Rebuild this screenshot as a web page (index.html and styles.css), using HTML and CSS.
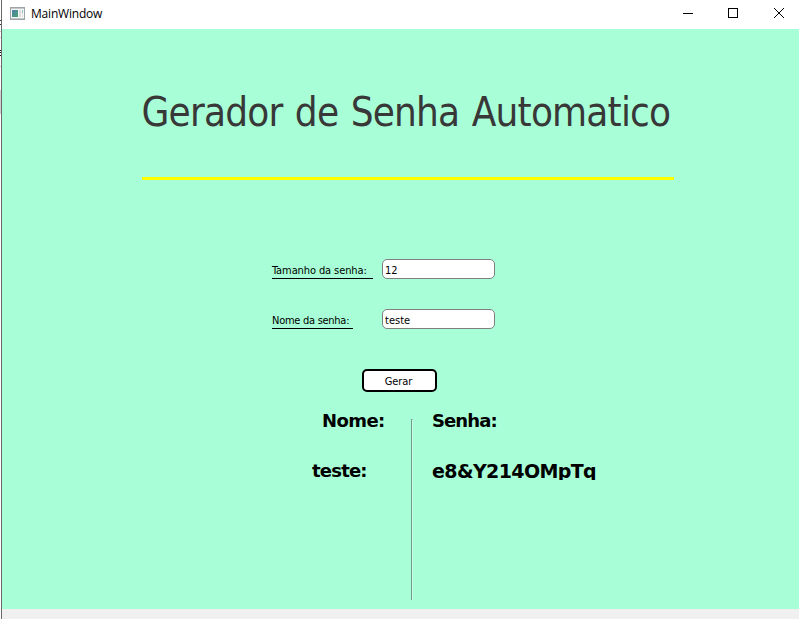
FILE: index.html
```html
<!DOCTYPE html>
<html lang="pt-BR">
<head>
<meta charset="utf-8">
<title>MainWindow</title>
<link rel="stylesheet" href="styles.css">
</head>
<body>
<div class="backdrop"></div>
<div class="window">
  <header class="titlebar">
    <svg class="app-icon" width="15" height="13" viewBox="0 0 15 13" shape-rendering="crispEdges">
      <defs><linearGradient id="pane" x1="0" y1="0" x2="1" y2="1"><stop offset="0" stop-color="#5080ae"/><stop offset="1" stop-color="#47a36f"/></linearGradient></defs>
      <path fill="#f6f6f6" stroke="#9ea3a7" d="M.5.5h14v12H.5z"/>
      <path fill="#c4c8cb" d="M1 1h13v1H1zM1 11h13v1H1z"/>
      <path fill="url(#pane)" d="M2 3h6v7H2z"/>
      <path fill="#dedede" d="M9 3h2v7H9z"/>
      <path fill="#8fc4b8" d="M12 3h1v3h-1z"/>
      <path fill="#e4e4e4" d="M12 6h1v4h-1z"/>
    </svg>
    <span class="caption">MainWindow</span>
    <svg class="controls" width="104" height="12" viewBox="0 0 104 12" fill="none" stroke="#000">
      <path d="M0 6.5h10M45.500 1.500h9v9h-9z" shape-rendering="crispEdges"/>
      <path d="M91 1l10 10M101 1L91 11"/>
    </svg>
  </header>
  <main class="content">
    <h1 class="title">Gerador de Senha Automatico</h1>
    <form class="form">
      <label class="label label-size" for="size"><span>Tamanho da senha:</span></label>
      <input class="field" id="size" value="12">
      <label class="label label-name" for="name"><span>Nome da senha:</span></label>
      <input class="field" id="name" value="teste">
    </form>
    <button class="generate" type="button">Gerar</button>
    <section class="results">
      <div class="names">
        <div class="cell head">Nome:</div>
        <div class="cell name">teste:</div>
      </div>
      <div class="divider"></div>
      <div class="passwords">
        <div class="cell head">Senha:</div>
        <div class="cell password">e8&amp;Y214OMpTq</div>
      </div>
    </section>
  </main>
  <footer class="statusbar"></footer>
</div>
</body>
</html>
```
FILE: styles.css
```css
* { box-sizing: border-box; }
body {
  margin: 0;
  width: 799px;
  height: 619px;
  display: flex;
  overflow: hidden;
  background: #fff;
  color: #000;
  font-family: "DejaVu Sans Condensed", "DejaVu Sans", sans-serif;
}
.backdrop {
  width: 1px;
  background: linear-gradient(#fff 0 20px, #333 20px 21px, #fff 21px 24px, #333 24px 25px, #fff 25px 31px, #ccc 31px 32px, #fff 32px 37px, #ccc 37px 38px, #fff 38px 50px, #111 50px 51px, #fff 51px 52px, #111 52px 53px, #fff 53px 55px, #111 55px 56px, #fff 56px 66px, #ccc 66px 67px, #fff 67px 90px, #d0d0d0 90px 114px, #fff 114px);
}
.window {
  flex: 1;
  border-left: 1px solid #696969;
  display: flex;
  flex-direction: column;
}
.titlebar {
  height: 29px;
  display: flex;
  align-items: center;
  padding: 0 12px 3px 8px;
}
.caption {
  margin-left: 6px;
  font: 12px/16px "Open Sans", sans-serif;
  letter-spacing: -0.2px;
  padding-top: 2px;
}
.controls { margin-left: auto; }
.content {
  height: 580px;
  background: #a8ffd7;
  padding: 60px 0 0 139px;
}
.title {
  width: 532px;
  height: 91px;
  margin: 0 0 0 1px;
  border-bottom: 3px solid #ff0;
  color: #383838;
  font: 400 40px/46px "DejaVu Sans Condensed", sans-serif;
  letter-spacing: -0.8px;
  word-spacing: 1.8px;
  text-indent: -0.5px;
  white-space: nowrap;
}
.form {
  display: grid;
  grid-template-columns: 110px 113px;
  grid-auto-rows: 20px;
  row-gap: 30px;
  margin: 79px 0 0 131px;
}
.label {
  border-bottom: 1px solid #000;
  font-size: 11px;
  line-height: 24px;
  white-space: nowrap;
}
.label-size { width: 101px; letter-spacing: -0.1px; }
.label-name { width: 81px; letter-spacing: -0.27px; }
.field {
  width: 113px;
  height: 20px;
  border: 1px solid #808080;
  border-radius: 5px;
  padding: 2px 2px 0;
  background: #fff;
  color: #000;
  font: 11px "DejaVu Sans Condensed", sans-serif;
}
.generate {
  display: block;
  width: 75px;
  height: 23px;
  margin: 40px 0 0 221px;
  padding: 1px 2px 0 0;
  border: 2px solid #000;
  border-radius: 5px;
  background: #fff;
  color: #000;
  font: 11px "DejaVu Sans Condensed", sans-serif;
  letter-spacing: -0.1px;
}
.results {
  display: flex;
  height: 208px;
  margin: 17px 0 0 170px;
  font-family: "DejaVu Sans", sans-serif;
  font-size: 18px;
  font-weight: 700;
  letter-spacing: -0.6px;
}
.names { width: 100px; }
.cell {
  height: 21px;
  line-height: 24px;
  overflow: hidden;
  white-space: nowrap;
}
.cell + .cell { margin-top: 29px; }
.names .head { margin-left: 11px; }
.names .name { margin-left: 1px; letter-spacing: -0.8px; }
.divider {
  width: 2px;
  height: 181px;
  margin-top: 10px;
  border-left: 1px solid #769b8b;
  border-right: 1px solid #c2ffe3;
  border-top: 1px solid #769b8b;
}
.passwords { margin-left: 19px; }
.passwords .head { letter-spacing: -0.9px; }
.password { font-size: 19px; line-height: 25px; }
.statusbar {
  flex: 1;
  background: #f0f0f0;
}
```
